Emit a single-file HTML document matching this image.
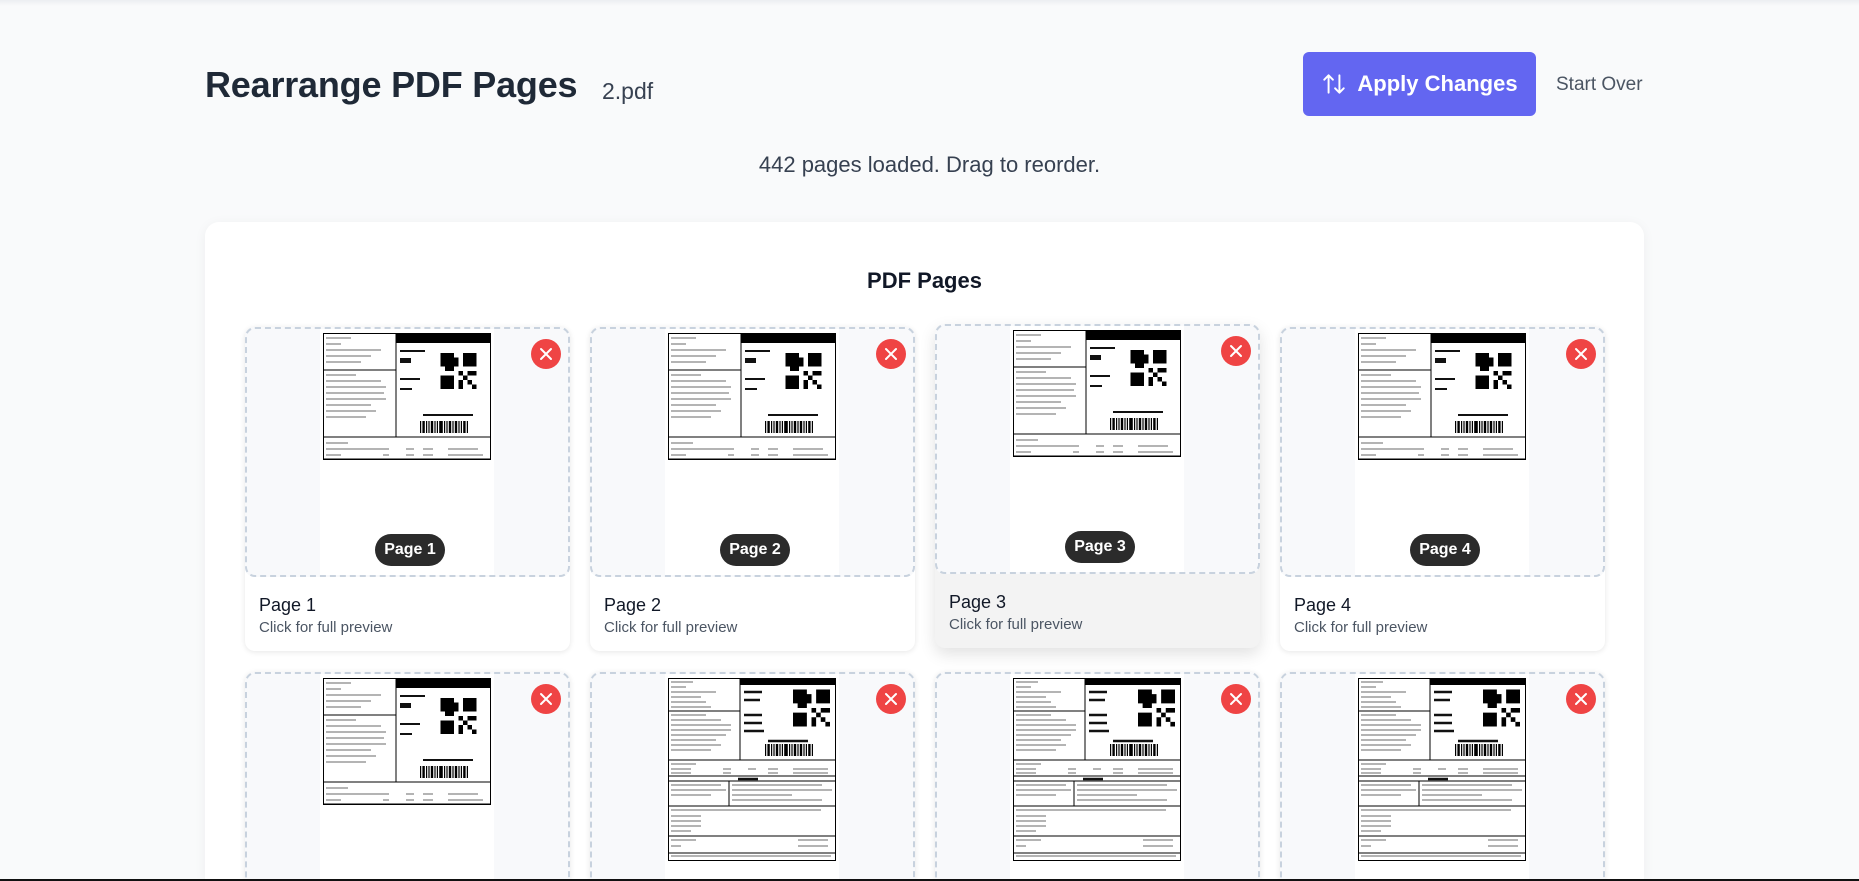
<!DOCTYPE html>
<html style="width:1859px;height:881px;overflow:hidden"><head><meta charset="utf-8"><style>
*{box-sizing:border-box;margin:0;padding:0}
body{width:1859px;height:881px;overflow:hidden;background:#f9fafb;font-family:"Liberation Sans",sans-serif}
#w{position:relative;width:1859px;height:881px;overflow:hidden}
.topsh{position:absolute;left:0;top:0;width:1859px;height:6px;background:linear-gradient(#eceef1,#f9fafb)}
h1{position:absolute;left:205px;top:64px;font-size:36px;font-weight:bold;color:#1f2937;letter-spacing:-0.2px}
.fn{position:absolute;left:602px;top:78px;font-size:23px;color:#374151}
.btn{position:absolute;left:1303px;top:52px;width:233px;height:64px;background:#6366f1;border-radius:6px;color:#fff;font-size:22px;font-weight:bold;display:flex;align-items:center;justify-content:center;gap:10px}
.so{position:absolute;left:1556px;top:74px;font-size:19px;color:#4b5563}
.sub{position:absolute;left:0;width:1859px;top:152px;text-align:center;font-size:22px;color:#374151}
.panel{position:absolute;left:205px;top:222px;width:1439px;height:657px;background:#fff;border-radius:14px 14px 0 0;box-shadow:0 2px 12px rgba(0,0,0,.05)}
.pt{position:absolute;left:205px;width:1439px;top:268px;text-align:center;font-size:22px;font-weight:bold;color:#111827}
.card{position:absolute;width:325px;height:324px;background:#fff;border-radius:10px;box-shadow:0 1px 6px rgba(0,0,0,.1)}
.card.r2{height:207px;border-radius:10px 10px 0 0;overflow:hidden}
.card.h{background:#f3f3f3;box-shadow:0 6px 16px rgba(0,0,0,.12)}
.th{position:absolute;left:0;top:0;width:325px;height:250px;background:#f8f9fb;border:2px dashed #c8d2de;border-radius:10px;overflow:hidden}
.pg{position:absolute;left:73px;top:-2px;width:174px;height:254px;background:#fff}
.lab{position:absolute;left:3px;top:6px}
.x{position:absolute;left:284px;top:10px;width:30px;height:30px;border-radius:50%;background:#ef4444}
.pill{position:absolute;left:128px;top:205px;width:70px;height:32px;border-radius:16px;background:#2b2b2b;color:#fff;font-weight:bold;font-size:16px;text-align:center;line-height:32px}
.t1{position:absolute;left:14px;top:268px;font-size:18px;color:#111827}
.t2{position:absolute;left:14px;top:292px;font-size:15px;color:#4b5563}
.bot{position:absolute;left:0;top:879px;width:1859px;height:2px;background:#111}
</style></head><body><div id="w">
<svg width="0" height="0" style="position:absolute">
<defs>
<symbol id="qr" viewBox="0 0 8 8"><path d="M0 0h3v3H0zM5 0h3v3H5zM0 5h3v3H0zM4 4h1v1H4zM6 4h2v1H6zM4 6h1v2H4zM6 6h1v1H6zM3 1h1v2H3zM1 3h2v1H1zM5 5h1v1H5zM7 7h1v1H7z" fill="#000"/></symbol>
<symbol id="bc" viewBox="0 0 40 10"><path d="M0 0h1v10H0zM2 0h2v10H2zM5 0h1v10H5zM7 0h1v10H7zM9 0h2v10H9zM12 0h1v10h-1zM14 0h1v10h-1zM16 0h3v10h-3zM20 0h1v10h-1zM22 0h1v10h-1zM24 0h2v10h-2zM27 0h1v10h-1zM29 0h2v10h-2zM32 0h1v10h-1zM34 0h1v10h-1zM36 0h2v10h-2zM39 0h1v10h-1z" fill="#000"/></symbol>
<symbol id="L1" viewBox="0 0 168 127">
<rect x="0.5" y="0.5" width="167" height="126" fill="#fff" stroke="#000"/>
<rect x="73" y="0" width="95" height="10" fill="#000"/>
<path d="M73 0V104M0 37H73M0 104H168M0 126H168" stroke="#000" fill="none"/>
<g stroke="#888" stroke-width="1.3"><path d="M3 5h25M3 11h15M3 17h55M3 23h45M3 29h35M3 42h30M3 48h55M3 54h60M3 60h58M3 66h60M3 72h45M3 78h50M3 84h40M3 110h22M3 116h60M60 116h6M83 116h8M100 116h10M125 116h30M3 122h15M60 122h6M83 122h8M100 122h10M125 122h35"/></g>
<g stroke="#111" stroke-width="2"><path d="M77 18h25M77 46h20M77 56h12M100 82h50"/></g>
<rect x="77" y="25" width="11" height="5" fill="#111"/>
<use href="#qr" x="117" y="20" width="37" height="36"/>
<use href="#bc" x="80" y="88" width="82" height="12"/>
</symbol>
<symbol id="L2" viewBox="0 0 168 183">
<rect x="0.5" y="0.5" width="167" height="182" fill="#fff" stroke="#000"/>
<rect x="72" y="0" width="96" height="7" fill="#000"/>
<path d="M72 0V82M0 33H72M0 82H168M0 98H168M0 103H168M0 128H168M0 158H168M0 175H168M61 103V128" stroke="#000" fill="none"/>
<g stroke="#888" stroke-width="1.2"><path d="M3 4h22M3 9h15M3 14h45M3 19h30M3 24h35M3 29h40M3 37h35M3 42h50M3 47h60M3 52h60M3 57h55M3 62h45M3 67h50M3 72h40M3 86h25M3 91h20M55 91h8M80 91h8M100 91h10M125 91h35M3 95h20M55 95h8M100 95h10M125 95h35M3 107h50M3 112h55M3 117h40M64 107h90M64 112h100M64 117h60M64 122h90M3 132h150M3 138h30M3 143h30M3 148h30M3 153h20M3 162h25M130 162h30M3 168h10M130 168h30M3 178h160"/></g>
<g stroke="#111" stroke-width="2.5"><path d="M76 14h18M76 22h16M76 37h18M76 45h18M76 53h20M100 63h40M70 101h20"/></g>
<use href="#qr" x="125" y="10" width="37" height="40"/>
<use href="#bc" x="78" y="66" width="86" height="12"/>
</symbol>
<symbol id="xx" viewBox="0 0 30 30"><path d="M10 10l10 10M20 10L10 20" stroke="#fff" stroke-width="2" stroke-linecap="round"/></symbol>
</defs></svg>
<div class="topsh"></div>
<h1>Rearrange PDF Pages</h1>
<div class="fn">2.pdf</div>
<div class="btn"><svg width="26" height="26" viewBox="0 0 24 24" fill="none" stroke="#fff" stroke-width="1.8" stroke-linecap="round" stroke-linejoin="round"><path d="M7 20V4M3 8l4-4 4 4M17 4v16M13 16l4 4 4-4"/></svg>Apply Changes</div>
<div class="so">Start Over</div>
<div class="sub">442 pages loaded. Drag to reorder.</div>
<div class="panel"></div>
<div class="pt">PDF Pages</div>

<div class="card" style="left:245px;top:327px"><div class="th"><div class="pg"><svg class="lab" width="168" height="127"><use href="#L1"/></svg></div><div class="pill">Page 1</div><div class="x"><svg width="30" height="30"><use href="#xx"/></svg></div></div><div class="t1">Page 1</div><div class="t2">Click for full preview</div></div>
<div class="card" style="left:590px;top:327px"><div class="th"><div class="pg"><svg class="lab" width="168" height="127"><use href="#L1"/></svg></div><div class="pill">Page 2</div><div class="x"><svg width="30" height="30"><use href="#xx"/></svg></div></div><div class="t1">Page 2</div><div class="t2">Click for full preview</div></div>
<div class="card h" style="left:935px;top:324px"><div class="th"><div class="pg"><svg class="lab" width="168" height="127"><use href="#L1"/></svg></div><div class="pill">Page 3</div><div class="x"><svg width="30" height="30"><use href="#xx"/></svg></div></div><div class="t1">Page 3</div><div class="t2">Click for full preview</div></div>
<div class="card" style="left:1280px;top:327px"><div class="th"><div class="pg"><svg class="lab" width="168" height="127"><use href="#L1"/></svg></div><div class="pill">Page 4</div><div class="x"><svg width="30" height="30"><use href="#xx"/></svg></div></div><div class="t1">Page 4</div><div class="t2">Click for full preview</div></div>

<div class="card r2" style="left:245px;top:672px"><div class="th"><div class="pg"><svg class="lab" width="168" height="127"><use href="#L1"/></svg></div><div class="x"><svg width="30" height="30"><use href="#xx"/></svg></div></div></div>
<div class="card r2" style="left:590px;top:672px"><div class="th"><div class="pg"><svg class="lab" width="168" height="183"><use href="#L2"/></svg></div><div class="x"><svg width="30" height="30"><use href="#xx"/></svg></div></div></div>
<div class="card r2" style="left:935px;top:672px"><div class="th"><div class="pg"><svg class="lab" width="168" height="183"><use href="#L2"/></svg></div><div class="x"><svg width="30" height="30"><use href="#xx"/></svg></div></div></div>
<div class="card r2" style="left:1280px;top:672px"><div class="th"><div class="pg"><svg class="lab" width="168" height="183"><use href="#L2"/></svg></div><div class="x"><svg width="30" height="30"><use href="#xx"/></svg></div></div></div>
<div class="bot"></div>
</div></body></html>
